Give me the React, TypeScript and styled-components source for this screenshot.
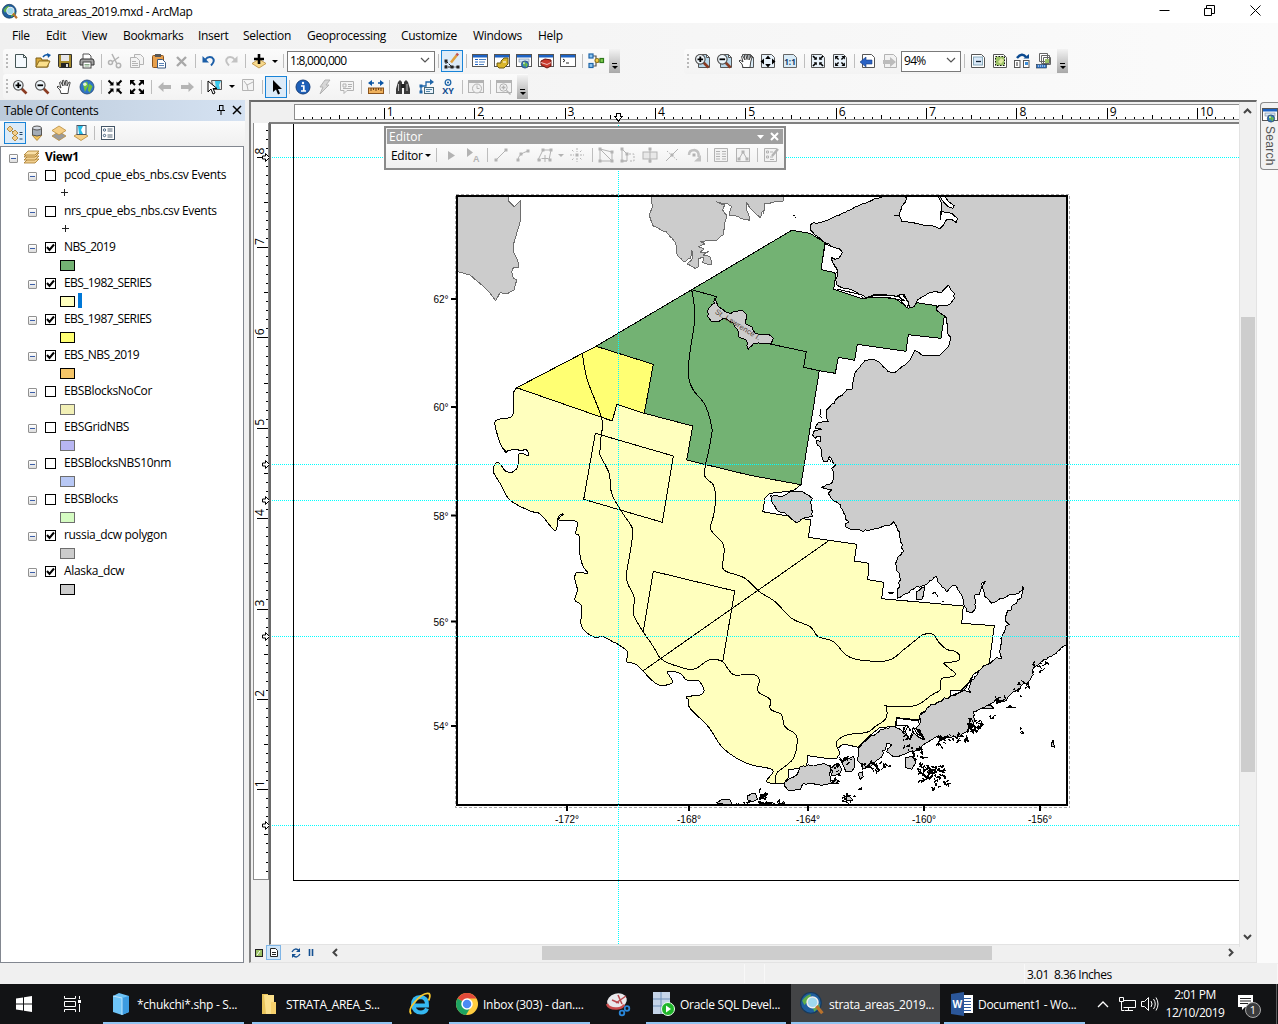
import React from "react";
import styled, { createGlobalStyle, css } from "styled-components";

const Global = createGlobalStyle`
  * { box-sizing: border-box; }
  html, body { margin: 0; padding: 0; overflow: hidden; }
  body { font-family: "Segoe UI", "Open Sans", "Noto Sans", sans-serif; font-size: 12px; color: #000; }
  svg { display: block; overflow: visible; }
`;

/* ---------- icons ---------- */

const page = (c = "#555", f = "#fff") => (
  <path d="M2.5 1.5h8l3 3v10h-11z M10.5 1.5v3h3" fill={f} stroke={c} />
);
const windowFrame = (
  <>
    <rect x="0.5" y="1.5" width="15" height="12" fill="#fff" stroke="#555" />
    <rect x="1" y="2" width="14" height="2.5" fill="#1c62c4" />
  </>
);
const lens = (sign: React.ReactNode) => (
  <>
    <path d="M9.5 9.5l5 5" stroke="#8a3b22" strokeWidth="2.6" />
    <circle cx="6.3" cy="6.3" r="4.8" fill="#eef6fb" stroke="#555" strokeWidth="1.2" />
    {sign}
  </>
);
const plusSign = <path d="M3.5 6.3h5.6M6.3 3.5v5.6" stroke="#000" strokeWidth="1.8" />;
const minusSign = <path d="M3.5 6.3h5.6" stroke="#000" strokeWidth="1.8" />;
const hand = (
  <path
    d="M5 14.5L4 11 1 8l1-1 3 2L3.5 3.5l1.2-.7L7 7 6.3 1.6l1.4-.3L9 6.5l.7-5 1.4.2L11 7l2-4 1.2.5-1.5 5.5-.7 5.5z"
    fill="#fff"
    stroke="#333"
    strokeWidth=".9"
  />
);
const corners = (s: number, arrows: string, tails: string) => (
  <g fill="#000" stroke="#000" transform={`translate(${8 - 8 * s} ${8 - 8 * s}) scale(${s})`}>
    <path d={tails} strokeWidth="2" />
    <path d={arrows} stroke="none" />
  </g>
);
const inward = (s = 1) =>
  corners(s, "M2.5 6.5h4v-4zM13.5 6.5h-4v-4zM2.5 9.5h4v4zM13.5 9.5h-4v4z", "M1.500 1.500l3.500 3.500M14.500 1.500L11 5M1.500 14.500L5 11M14.500 14.500L11 11");
const outward = (s = 1) =>
  corners(s, "M1 6V1h5zM15 6V1h-5zM1 10v5h5zM15 10v5h-5z", "M6 6L3 3M10 6l3-3M6 10l-3 3M10 10l3 3");
const globe = (cx: number, cy: number, r: number) => (
  <>
    <circle cx={cx} cy={cy} r={r} fill="#2f74c9" stroke="#27486e" strokeWidth=".8" />
    <path
      d={`M${cx - r * 0.6} ${cy - r * 0.5}l${r * 0.6} ${-r * 0.3} ${r * 0.2} ${r * 0.6} ${-r * 0.5} ${r * 0.9}zM${cx + r * 0.3} ${cy - r * 0.5}l${r * 0.5} ${r * 0.4} ${-r * 0.4} ${r * 0.9} ${-r * 0.3} ${-r * 0.3}z`}
      fill="#6fbf3c"
    />
    <circle cx={cx - r * 0.3} cy={cy - r * 0.4} r={r * 0.25} fill="#fff" opacity=".8" />
  </>
);
const dia = (y: number, f: string) => <path d={`M8 ${y}l7 4.500-7 4.500-7-4.500z`} fill={f} stroke="#b88a3a" strokeWidth=".8" />;
const G = "#b3b3b3";
const node = (x: number, y: number, c = G) => <rect x={x - 1.5} y={y - 1.5} width="3" height="3" fill={c} />;

const icons: Record<string, React.ReactNode> = {
  newDoc: page("#455", "#f4f9fd"),
  open: (
    <>
      <path d="M1 14V5h5l1 2h6v7z" fill="#d9a93a" stroke="#7c5e17" />
      <path d="M1 14l3-6h11l-3 6z" fill="#fbe08c" stroke="#8a6a1e" />
      <path d="M8 4q2-3 5-2" stroke="#0b55a5" strokeWidth="1.5" fill="none" />
      <path d="M12 0l4 2-3 3z" fill="#0b55a5" />
    </>
  ),
  save: (
    <>
      <path d="M1.500 1.500h13v13h-12l-1-1z" fill="#a58a2c" stroke="#333" />
      <rect x="4" y="2" width="8" height="6" fill="#e6e6ea" />
      <rect x="4" y="10" width="8" height="4.500" fill="#222" />
      <rect x="9" y="11" width="2" height="3" fill="#ddd" />
    </>
  ),
  print: (
    <>
      <path d="M4 6V1h6l2 2v3" fill="#fff" stroke="#555" />
      <path d="M2 6h12l1 2v4H1V8z" fill="#a3a3a3" stroke="#333" />
      <rect x="4" y="9" width="8" height="6" fill="#fff" stroke="#444" />
      <path d="M5.500 11.500h5M5.500 13h5" stroke="#8a8" />
    </>
  ),
  cut: (
    <g stroke={G} strokeWidth="1.500" fill="none">
      <path d="M5 1l5 10M12 4L5 9" />
      <circle cx="3.500" cy="9.500" r="2" />
      <circle cx="11.500" cy="12.500" r="2.200" />
    </g>
  ),
  copy: (
    <g fill="#f3f3f3" stroke={G}>
      <path d="M5.500 1.500h6l3 3v7h-9z" />
      <path d="M1.500 4.500h6l3 3v7h-9zM3 8.500h4M3 10.500h6M3 12.500h6" />
    </g>
  ),
  paste: (
    <>
      <rect x="1.500" y="2.500" width="11" height="12" rx="1" fill="#e8a04c" stroke="#8a531c" />
      <rect x="4" y="1" width="6" height="3" fill="#555" />
      <path d="M6.500 6.500h5l3 3v5.500h-8z" fill="#fff" stroke="#3c5a80" />
      <path d="M8 10.500h5M8 12.500h5" stroke="#5a84b8" />
    </>
  ),
  del: <path d="M4 4l9 9M13 4l-9 9" stroke="#a8a8a8" strokeWidth="2.400" />,
  undo: (
    <>
      <path d="M4 7q3-4 7-2.500 4 3-1 8" fill="none" stroke="#1b5ea8" strokeWidth="2" />
      <path d="M1.500 3v6.500H8z" fill="#1b5ea8" />
    </>
  ),
  redo: (
    <>
      <path d="M12 7q-3-4-7-2.500-4 3 1 8" fill="none" stroke="#c2c2c2" strokeWidth="2" />
      <path d="M14.500 3v6.500H8z" fill="#c2c2c2" />
    </>
  ),
  add: (
    <>
      {dia(6, "#f7d98c")}
      <path d="M8 1v10M3 6h10" stroke="#000" strokeWidth="2.600" />
    </>
  ),
  edit: (
    <>
      <path d="M2 8l6 6h6M2 8v6h6" stroke="#222" fill="none" strokeDasharray="3 1" />
      {node(2, 8, "#222")}
      {node(2, 14, "#222")}
      {node(8, 14, "#222")}
      {node(14, 14, "#222")}
      <path d="M7 9.500l5.500-7" stroke="#e0a13c" strokeWidth="2.600" />
      <path d="M12.500 2.500L14 .700" stroke="#c0504d" strokeWidth="2.600" />
    </>
  ),
  toc: (
    <>
      {windowFrame}
      <path d="M3 6.500h3M3 9h3M3 11.500h3" stroke="#1c62c4" />
      <path d="M7 6.500h7M7 9h6M7 11.500h5" stroke="#4b7fc0" />
    </>
  ),
  catalog: (
    <>
      {windowFrame}
      <path d="M3 13v-3h4V8l3-3h4v6l-4 4H5z" fill="#d9b62c" stroke="#6d5a10" />
      <path d="M9 9h3" stroke="#fff" />
    </>
  ),
  search: (
    <>
      {windowFrame}
      <rect x="3" y="6" width="10" height="3" fill="#d8e9f8" stroke="#789" strokeWidth=".6" />
      {globe(9, 11.500, 3.600)}
    </>
  ),
  toolbox: (
    <>
      {windowFrame}
      <path d="M3 8l4-2 6 1v6l-4 2-6-3z" fill="#c93a2e" stroke="#6d130c" />
      <path d="M3 9.500l6 2 4-2" stroke="#fff" strokeWidth=".7" fill="none" />
    </>
  ),
  python: (
    <>
      {windowFrame}
      <path d="M3 6l2 1.500L3 9M6 10h3" stroke="#222" fill="none" />
    </>
  ),
  model: (
    <g strokeWidth="1.200">
      <path d="M5 3h3v4h3M5 13h3V8" fill="none" stroke="#555" />
      <rect x="1" y="1" width="4" height="4" fill="#8ec5ef" stroke="#1e65a8" />
      <rect x="1" y="10.500" width="4" height="4" fill="#8ec5ef" stroke="#1e65a8" />
      <circle cx="9" cy="7.500" r="2" fill="#f4cf4c" stroke="#8f741a" />
      <rect x="12" y="5.500" width="3.500" height="4" fill="#7ecb4e" stroke="#2f7a1b" />
    </g>
  ),
  zoomIn: lens(plusSign),
  zoomOut: lens(minusSign),
  pan: hand,
  globe: globe(8, 8, 7),
  fixedIn: inward(),
  fixedOut: outward(),
  back: <path d="M1 8l5.500-5v3H14v4H6.500v3z" fill="#b5b5b5" />,
  fwd: <path d="M15 8L9.500 3v3H2v4h7.500v3z" fill="#b5b5b5" />,
  select: (
    <>
      <path d="M4.500 1.500h10v9h-8z" fill="#e9e9e9" stroke="#555" />
      <path d="M8 2h6l-2 4 1 4H9z" fill="#38c8ec" />
      <path d="M1 2v11l3-3 2 5 2-1-2-4.500h4z" fill="#fff" stroke="#000" />
    </>
  ),
  clearSel: <path d="M2.500 .500h11v11h-11zM4 2l3 4 6-3M7 6l1 5" fill="#f4f4f4" stroke={G} />,
  pointer: <path d="M5 1v12l3-2.500 2 5 2-1-2-4.500h4z" fill="#000" />,
  info: (
    <>
      <circle cx="8" cy="8" r="7" fill="#1d5fb8" stroke="#153f7c" />
      <path d="M6 7h2.800v4.500M6 12h5" stroke="#fff" strokeWidth="1.700" fill="none" />
      <circle cx="8" cy="4" r="1.200" fill="#fff" />
    </>
  ),
  bolt: <path d="M8 1h5L9 6h3L3 15l3-7H3z" fill="#d7d7d7" stroke={G} />,
  popup: <path d="M1.500 2.500h13v9H8l-3 3v-3H1.500zM4 5h3v3H4zM9 5.500h4M9 7.500h4M4 9.500h8" fill="#f4f4f4" stroke={G} />,
  measure: (
    <>
      <path d="M2 4h12" stroke="#0b55a5" strokeWidth="1.500" strokeDasharray="4 4" />
      <path d="M0 4l4-3v6zM16 4l-4-3v6z" fill="#0b55a5" />
      <rect x="0.500" y="9" width="15" height="5.500" fill="#efb15c" stroke="#8a531c" />
      <path d="M3 9v3M5.500 9v2M8 9v3M10.500 9v2M13 9v3" stroke="#6b3d12" />
    </>
  ),
  find: (
    <>
      <path d="M3 3l2-2 2 2v12H1v-5zM13 3l-2-2-2 2v12h6v-5z" fill="#3b3b3b" />
      <rect x="6" y="5" width="4" height="4" fill="#222" />
      <path d="M3.500 5v7M12 5v7" stroke="#bbb" />
    </>
  ),
  route: (
    <>
      <path d="M3 13V7h5V3h5" fill="none" stroke="#1e65a8" strokeWidth="1.300" />
      <path d="M12 0l4 3-4 3z" fill="#1e65a8" />
      {node(3, 13, "#1e65a8")}
      {node(3, 7, "#1e65a8")}
      <rect x="6.500" y="8.500" width="9" height="6" fill="#eaf3fb" stroke="#467" />
      <path d="M8 10.500h6M8 12.500h4" stroke="#58a" />
    </>
  ),
  xy: (
    <>
      <circle cx="8" cy="3.500" r="2.800" fill="#fff" stroke="#1e65a8" strokeWidth="1.300" />
      <circle cx="8" cy="3.500" r="1.100" fill="#1e65a8" />
      <text x="8" y="15" textAnchor="middle" fontSize="9" fontWeight="700" fill="#134f91" fontFamily="Open Sans, sans-serif">XY</text>
    </>
  ),
  time: (
    <g fill="#f2f2f2" stroke={G}>
      <rect x="0.500" y="1.500" width="15" height="12" />
      <path d="M1 3h14" strokeWidth="2" />
      <circle cx="9" cy="9.500" r="4.500" />
      <path d="M9 6.500v3h2.500" fill="none" />
    </g>
  ),
  viewer: (
    <g fill="#f2f2f2" stroke={G}>
      <rect x="0.500" y="1.500" width="15" height="12" />
      <path d="M1 3h14" strokeWidth="2" />
      <circle cx="7.500" cy="8.500" r="3.700" />
      <path d="M5.500 8.500h4M7.500 6.500v4M10.500 11.500l4 4" strokeWidth="1.500" />
    </g>
  ),
  pgZoomIn: (
    <>
      <g transform="translate(2 0)">{page("#555", "#b9d9ec")}</g>
      {lens(plusSign)}
    </>
  ),
  pgZoomOut: (
    <>
      <g transform="translate(2 0)">{page("#555", "#b9d9ec")}</g>
      {lens(minusSign)}
    </>
  ),
  pgPan: (
    <>
      <g transform="translate(2 0)">{page("#555", "#d9ecf8")}</g>
      {hand}
    </>
  ),
  pgWhole: (
    <>
      <path d="M1.500 1.500h10l3 3v10h-13z" fill="#e8f2fa" stroke="#555" />
      <path d="M8 2.500l2.800 3.500H5.200zM8 14.500l2.800-3.500H5.200zM.500 8.500L4 5.500v6zM15.500 8.500L12 5.500v6z" fill="#000" />
    </>
  ),
  pg100: (
    <>
      <path d="M1.500 1.500h10l3 3v10h-13z" fill="#d9ecf8" stroke="#666" />
      <text x="8" y="12" textAnchor="middle" fontSize="8" fontWeight="700" fill="#123c6b" fontFamily="Open Sans, sans-serif">1:1</text>
    </>
  ),
  pgFixedIn: (
    <>
      <path d="M1.500 1.500h10l3 3v10h-13z" fill="#e8f2fa" stroke="#555" />
      {inward(0.78)}
    </>
  ),
  pgFixedOut: (
    <>
      <path d="M1.500 1.500h10l3 3v10h-13z" fill="#e8f2fa" stroke="#555" />
      {outward(0.7)}
    </>
  ),
  pgBack: (
    <>
      <path d="M2.500 1.500h9l3 3v10h-12z" fill="#fff" stroke="#555" />
      <path d="M0 9l6-5v3h6v4H6v3z" fill="#2a62c4" stroke="#173d85" strokeWidth=".6" />
    </>
  ),
  pgFwd: (
    <>
      <path d="M2.500 1.500h9l3 3v10h-12z" fill="#f2f2f2" stroke={G} />
      <path d="M14 9L8 4v3H1v4h7v3z" fill="#bcbcbc" />
    </>
  ),
  draft: (
    <>
      <path d="M1.500 1.500h10l3 3v10h-13z" fill="#fff" stroke="#555" />
      <rect x="3.500" y="4" width="9" height="8" fill="#d9e8f8" stroke="#8ab" />
      <path d="M6 8.500h5" stroke="#123" strokeWidth="1.300" />
    </>
  ),
  focus: (
    <>
      <path d="M1.500 1.500h10l3 3v10h-13z" fill="#fff" stroke="#555" />
      <rect x="3.500" y="3.500" width="9" height="9" fill="#9cc266" stroke="#111" strokeDasharray="1.500 1.500" />
      <path d="M6 9l3-4 3 2-3 4z" fill="#dfe9a0" />
    </>
  ),
  changeLayout: (
    <>
      <path d="M3 5q5-6 9-1" stroke="#0b4a90" strokeWidth="2.500" fill="none" />
      <path d="M9.500 5.500H15V1z" fill="#0b4a90" />
      <rect x="0.500" y="7.500" width="5.500" height="7" fill="#fff" stroke="#555" />
      <rect x="9.500" y="7.500" width="5.500" height="7" fill="#fff" stroke="#555" />
      <path d="M2 10h2M2 12h2" stroke="#333" />
      <rect x="11" y="9" width="3" height="3" fill="#3c8ed8" />
    </>
  ),
  ddp: (
    <>
      <path d="M3.500 .500h8v8h-8zM5.500 2.500h8v8h-8zM7.500 4.500h7v7h-7z" fill="#fff" stroke="#666" />
      <rect x="9" y="6" width="4" height="4" fill="#9cc266" />
      <rect x="0.500" y="11.500" width="10" height="3.500" fill="#2f74c9" stroke="#234" strokeWidth=".6" />
      <path d="M2 13h7" stroke="#fff" strokeDasharray="1 1" />
    </>
  ),
  listDraw: (
    <>
      <path d="M4 5l4 4v4h2M8 8h3" stroke="#a77a28" fill="none" />
      <path d="M0 4l3-3 3 3-3 3zM5 8l3-3 3 3-3 3zM5 13l3-3 3 3-3 3z" fill="#f4cf8c" stroke="#a77a28" strokeWidth=".8" />
      <path d="M12.500 7.500h3M12.500 9.500h3M12.500 14h3" stroke="#246" />
    </>
  ),
  listSource: (
    <>
      <path d="M3 10h10l-5 5.500z" fill="#f1c25c" stroke="#a77a28" strokeWidth=".8" />
      <path d="M3.500 3v7q4.500 2 9 0V3" fill="#a3acb8" stroke="#555" />
      <ellipse cx="8" cy="3" rx="4.500" ry="2" fill="#d5dae2" stroke="#555" />
    </>
  ),
  listVis: (
    <>
      {dia(6.500, "#9b9b9b")}
      {dia(1, "#f6cf86")}
    </>
  ),
  listSel: (
    <>
      {dia(6.500, "#f6cf86")}
      <rect x="4" y="0.500" width="9" height="9" fill="#fff" stroke="#456" />
      <path d="M5 1h5L8 5l2 4H6z" fill="#23bde8" />
    </>
  ),
  options: (
    <>
      <rect x="1.500" y="1.500" width="13" height="13" fill="#fff" stroke="#456" />
      <circle cx="4.500" cy="5" r="1.200" fill="none" stroke="#246" strokeWidth=".8" />
      <circle cx="4.500" cy="10.500" r="1.200" fill="none" stroke="#246" strokeWidth=".8" />
      <path d="M7.500 4h5M7.500 6h5M7.500 10h5M7.500 12h5" stroke="#567" />
    </>
  ),
  layers: (
    <>
      <path d="M1 14l4-4h11l-4 4z" fill="#f0cf90" stroke="#a77a28" strokeWidth=".8" />
      <path d="M1 11l4-4h11l-4 4z" fill="#f0cf90" stroke="#a77a28" strokeWidth=".8" />
      <path d="M1 8l4-4h11l-4 4z" fill="#f0cf90" stroke="#a77a28" strokeWidth=".8" />
      <path d="M1 6l4-4h11l-4 4z" fill="#f9dfa6" stroke="#a77a28" strokeWidth=".8" />
    </>
  ),
  eArrow: <path d="M5 4v9l7-4.500z" fill={G} />,
  eArrowA: (
    <>
      <path d="M2 1v9l6-4.500z" fill={G} />
      <text x="8" y="15" fontSize="9" fontWeight="700" fill={G} fontFamily="Liberation Sans, sans-serif">A</text>
    </>
  ),
  eLine: (
    <>
      <path d="M3 13L13 3" stroke={G} />
      {node(3, 13)}
      {node(13, 3)}
    </>
  ),
  eArc: (
    <>
      <path d="M3 13q0-6 10-9" stroke={G} fill="none" />
      {node(3, 13)}
      {node(6, 7)}
      {node(13, 4)}
    </>
  ),
  eTrace: (
    <>
      <path d="M6 3h8l-2 10M1 13L6 3M1 13h3" stroke={G} fill="none" />
      {node(6, 3)}
      {node(14, 3)}
      {node(2, 13)}
      {node(13, 13)}
      <path d="M4.500 11.500h7M8 8v7" stroke={G} />
    </>
  ),
  ePoint: (
    <>
      <path d="M1 8h4M11 8h4M8 1v4M8 11v4M3 3l2 2M11 11l2 2M3 13l2-2M11 5l2-2" stroke={G} strokeDasharray="2 1" />
      {node(8, 8)}
    </>
  ),
  eVert: (
    <>
      <path d="M2 2v12h12V5zM2 2l12 12" stroke={G} fill="none" />
      {node(2, 2)}
      {node(2, 14)}
      {node(14, 14)}
      {node(14, 5)}
    </>
  ),
  eReshape: (
    <>
      <path d="M2 2v12h5V7L2 2M2 14h5" stroke={G} fill="none" />
      <path d="M9 7h5v7H9" stroke={G} fill="none" strokeDasharray="2 1.500" />
      {node(2, 2)}
      {node(2, 14)}
      {node(7, 7)}
    </>
  ),
  eCut: (
    <>
      <rect x="1" y="5" width="14" height="7" fill="#e8e8e8" stroke={G} />
      <path d="M8 1v15" stroke={G} />
      {node(8, 2)}
      {node(8, 14)}
    </>
  ),
  eSplit: (
    <>
      <path d="M2 14L14 2" stroke={G} />
      <path d="M3 4l10 9" stroke={G} strokeDasharray="1.500 1.500" />
      {node(8, 8)}
    </>
  ),
  eRotate: (
    <>
      <path d="M3 8q0-5 5.500-5 5 1 4 7" fill="none" stroke="#c2c2c2" strokeWidth="2.500" />
      <path d="M8 14.500h7V8z" fill="#c2c2c2" />
      {node(8, 8)}
    </>
  ),
  eAttr: <path d="M1.500 1.500h13v13h-13zM3 4.500h4M3 7h4M3 9.500h4M3 12h4M9 4.500h4M9 7h4M9 9.500h4M9 12h4" fill="#f2f2f2" stroke={G} />,
  eSketch: (
    <>
      <rect x="1.500" y="1.500" width="13" height="13" fill="#f2f2f2" stroke={G} />
      <path d="M4 12l4-7 4 7" stroke={G} fill="none" />
      {node(4, 12)}
      {node(8, 5)}
      {node(12, 12)}
    </>
  ),
  eCreate: (
    <>
      <path d="M1.500 1.500h12v13h-12zM3.500 4h2v2h-2zM3.500 9h2v2h-2zM7 5h3M7 10h3M7 12.500h4" fill="#f2f2f2" stroke={G} />
      <path d="M9 9l6-7" stroke={G} strokeWidth="2.400" />
    </>
  ),
};

const Icon = ({ name, size = 16 }: { name: string; size?: number }) => (
  <svg width={size} height={size} viewBox="0 0 16 16" fill="none">
    {icons[name]}
  </svg>
);

/* ---------- window chrome ---------- */

const Screen = styled.div`
  width: 1278px;
  height: 1024px;
  display: flex;
  flex-direction: column;
  background: #f0f0f0;
  overflow: hidden;
  white-space: pre;
`;

const TitleBar = styled.header`
  height: 23px;
  flex: none;
  background: #fff;
  display: flex;
  align-items: center;
  padding-left: 2px;
`;
const Title = styled.span`
  margin-left: 5px;
  flex: 1;
  font-size: 12px;
  letter-spacing: -0.430px;
`;
const Caption = styled.span`
  width: 45.500px;
  height: 21px;
  align-self: flex-start;
  display: flex;
  align-items: center;
  justify-content: center;
`;

const Bars = styled.div`
  height: 77px;
  flex: none;
  background: linear-gradient(90deg, #f0f0f0, #fbfbfb);
  display: flex;
  flex-direction: column;
`;
const MenuBar = styled.nav`
  height: 26px;
  display: flex;
  align-items: center;
  padding-left: 12px;
`;
const MenuItem = styled.span<{ $w: number }>`
  width: ${(p) => p.$w}px;
  letter-spacing: -0.300px;
`;
const BarRow = styled.div`
  height: 26px;
  display: flex;
  align-items: flex-start;
  padding-left: 3px;
`;
const Toolbar = styled.div<{ $ml?: number }>`
  height: 25px;
  margin-left: ${(p) => p.$ml ?? 0}px;
  display: flex;
  align-items: center;
  background: linear-gradient(#fbfbfb, #f3f3f3);
  border-radius: 3px 0 0 3px;
`;
const Grip = styled.span<{ $w?: number }>`
  width: ${(p) => p.$w ?? 7}px;
  height: 15px;
  padding-left: 3px;
  &::before {
    content: "";
    display: block;
    width: 2px;
    height: 15px;
    background: repeating-linear-gradient(#b8b8b8 0 2px, transparent 2px 4px);
  }
`;
const Slot = styled.span<{ $on?: boolean; $w?: number }>`
  width: ${(p) => p.$w ?? 22}px;
  height: 22px;
  flex: none;
  display: flex;
  align-items: center;
  justify-content: center;
  ${(p) =>
    p.$on &&
    css`
      border: 1px solid #1883d7;
      background: #dcebf8;
    `}
`;
const Sep = styled.span<{ $w?: number }>`
  width: ${(p) => p.$w ?? 6}px;
  height: 14px;
  flex: none;
  display: flex;
  justify-content: center;
  &::before {
    content: "";
    width: 1px;
    background: #bdbdbd;
  }
`;
const Triangle = styled.span<{ $c?: string; $w?: number }>`
  width: ${(p) => p.$w ?? 9}px;
  flex: none;
  display: flex;
  justify-content: center;
  &::before {
    content: "";
    border: 3px solid transparent;
    border-top-color: ${(p) => p.$c ?? "#000"};
    border-bottom: 0;
  }
`;
const Combo = styled.span<{ $w: number }>`
  width: ${(p) => p.$w}px;
  height: 21px;
  border: 1px solid #7a7a7a;
  background: #fff;
  display: flex;
  align-items: center;
  justify-content: space-between;
  padding: 0 4px 2px 2px;
  letter-spacing: -0.720px;
`;
const Overflow = styled.span`
  width: 11px;
  height: 24px;
  margin-left: 2px;
  background: linear-gradient(#f3f3f3, #a8a8a8);
  display: flex;
  flex-direction: column;
  align-items: center;
  justify-content: flex-end;
  padding-bottom: 4px;
  gap: 2px;
  &::before {
    content: "";
    width: 5px;
    height: 1px;
    background: #000;
  }
  &::after {
    content: "";
    border: 3px solid transparent;
    border-top-color: #000;
    border-bottom: 0;
  }
`;
const Chevron = () => (
  <svg width="10" height="6" viewBox="0 0 10 6">
    <path d="M1 1l4 4 4-4" fill="none" stroke="#555" strokeWidth="1.200" />
  </svg>
);

type Item = string | [string, number] | { on: string };
const Tools = ({ items }: { items: Item[] }) => (
  <>
    {items.map((it, i) => {
      if (typeof it === "object" && !Array.isArray(it))
        return (
          <Slot key={i} $on>
            <Icon name={it.on} />
          </Slot>
        );
      const [n, w] = Array.isArray(it) ? it : [it, undefined];
      if (n === "|") return <Sep key={i} $w={w} />;
      if (n === "v") return <Triangle key={i} $w={w} />;
      if (n === "vg") return <Triangle key={i} $w={w} $c={G} />;
      return (
        <Slot key={i} $w={w}>
          <Icon name={n} />
        </Slot>
      );
    })}
  </>
);

/* ---------- table of contents ---------- */

const Main = styled.main`
  height: 863px;
  flex: none;
  display: flex;
`;
const Toc = styled.aside`
  width: 245px;
  flex: none;
  display: flex;
  flex-direction: column;
`;
const TocHead = styled.div`
  height: 21px;
  display: flex;
  align-items: center;
  padding: 0 4px 1px 4px;
  background: linear-gradient(90deg, #bccbdb, #d5e2f2);
  letter-spacing: -0.360px;
  gap: 8px;
  & > span {
    flex: 1;
    padding-top: 1px;
  }
`;
const TocTools = styled.div`
  height: 25px;
  display: flex;
  align-items: center;
  padding: 0 0 2px 4px;
  background: linear-gradient(#fbfbfb, #f0f0f0);
`;
const Tree = styled.div`
  flex: 1;
  width: 244px;
  background: #fff;
  border: 1px solid #828790;
  padding-top: 1px;
`;
const Row = styled.div<{ $indent: number }>`
  height: 18px;
  display: flex;
  align-items: center;
  padding-left: ${(p) => p.$indent}px;
`;
const Expander = styled.span`
  width: 9px;
  height: 9px;
  margin-top: 2px;
  border: 1px solid #919191;
  border-radius: 1px;
  background: linear-gradient(#fff, #ddd);
  display: flex;
  align-items: center;
  justify-content: center;
  &::before {
    content: "";
    width: 5px;
    height: 1px;
    background: #3c5fa8;
  }
`;
const Check = styled.span`
  width: 11px;
  height: 11px;
  margin: 1px 8px 0 8px;
  border: 1px solid #000;
  background: #fff;
`;
const Name = styled.span<{ $bold?: boolean; $caps?: boolean }>`
  font-weight: ${(p) => (p.$bold ? 700 : 400)};
  letter-spacing: ${(p) => (p.$bold ? -0.4 : p.$caps ? -0.6 : -0.33)}px;
  margin-top: -1px;
`;
const Swatch = styled.span<{ $fill: string; $line: string }>`
  width: 15px;
  height: 11px;
  margin-top: 1px;
  background: ${(p) => p.$fill};
  border: 1px solid ${(p) => p.$line};
`;
const EditMark = styled.span`
  width: 4px;
  height: 15px;
  margin: -1px 0 0 3px;
  background: #0078d7;
`;
const Cross = styled.span`
  width: 7px;
  height: 7px;
  margin-top: -2px;
  background: linear-gradient(#222, #222) 3px 0 / 1px 7px no-repeat, linear-gradient(#222, #222) 0 3px / 7px 1px no-repeat;
`;

const layers = [
  { name: "pcod_cpue_ebs_nbs.csv Events", on: false, cross: 60 },
  { name: "nrs_cpue_ebs_nbs.csv Events", on: false, cross: 61 },
  { name: "NBS_2019", on: true, fill: "#73b273" },
  { name: "EBS_1982_SERIES", on: true, fill: "#ffffbe", editing: true },
  { name: "EBS_1987_SERIES", on: true, fill: "#ffff73" },
  { name: "EBS_NBS_2019", on: true, fill: "#f5c567" },
  { name: "EBSBlocksNoCor", on: false, fill: "#f2f0b6", soft: true },
  { name: "EBSGridNBS", on: false, fill: "#b8b6f2", soft: true },
  { name: "EBSBlocksNBS10nm", on: false, fill: "#b8c8f5", soft: true },
  { name: "EBSBlocks", on: false, fill: "#d5fcc2", soft: true },
  { name: "russia_dcw polygon", on: true, fill: "#cccccc", soft: true },
  { name: "Alaska_dcw", on: true, fill: "#cccccc" },
];

/* ---------- layout view ---------- */

const View = styled.section`
  width: 1008px;
  margin-left: 4px;
  display: flex;
  flex-direction: column;
  background: #f0f0f0;
  border-top: 2px solid #696969;
  border-left: 2px solid #828282;
  border-right: 1px solid #e3e3e3;
  border-bottom: 1px solid #e3e3e3;
`;
const RulerTop = styled.div`
  height: 20px;
  flex: none;
  display: flex;
  padding: 2px 0 0 20px;
`;
const Body = styled.div`
  height: 823px;
  flex: none;
  display: flex;
`;
const RulerLeft = styled.div`
  width: 18px;
  flex: none;
  padding: 1px 0 0 2px;
`;
const Center = styled.div`
  width: 970px;
  height: 823px;
  flex: none;
  position: relative;
  overflow: hidden;
  background: #fff;
  border-left: 2px solid #696969;
  border-top: 2px solid #808080;
  border-bottom: 1px solid #e3e3e3;
`;
const VScroll = styled.div`
  width: 16px;
  height: 845px;
  margin-top: -20px;
  margin-left: 0;
  display: flex;
  flex-direction: column;
  align-items: center;
  justify-content: space-between;
  padding: 6px 0 7px;
  border-left: 1px solid #e3e3e3;
`;
const VThumb = styled.div`
  width: 14px;
  height: 455px;
  margin-top: 41px;
  background: #cdcdcd;
`;
const HScroll = styled.div`
  height: 17px;
  display: flex;
  align-items: center;
  padding-bottom: 2px;
`;
const HThumb = styled.div`
  width: 450px;
  height: 14px;
  background: #cdcdcd;
  margin: 1px 0 0 204px;
`;
const Gap = styled.span<{ $w: number }>`
  width: ${(p) => p.$w}px;
  flex: none;
`;
const ViewTab = styled.span<{ $on?: boolean }>`
  width: 15px;
  height: 15px;
  flex: none;
  display: flex;
  align-items: center;
  justify-content: center;
  ${(p) =>
    p.$on &&
    css`
      border: 1px solid #7fb5e6;
      background: #cfe5f8;
    `}
`;

const Dock = styled.div`
  flex: 1;
  background: #fbfbfb;
  padding: 2px 0 0 3px;
`;
const DockTab = styled.div`
  height: 68px;
  border: 1px solid #8c8c8c;
  border-right: 0;
  border-radius: 4px 0 0 4px;
  background: #f2f2f2;
  display: flex;
  flex-direction: column;
  align-items: center;
  padding-top: 4px;
  gap: 3px;
  & > span {
    writing-mode: vertical-rl;
    color: #555;
    font-family: "Liberation Sans", sans-serif;
    font-size: 12px;
    line-height: 14px;
    letter-spacing: 0.300px;
  }
`;

const EditorBar = styled.div`
  position: absolute;
  left: 113px;
  top: 2px;
  width: 402px;
  height: 44px;
  border: 2px solid #8a8a8a;
  background: #f4f4f4;
  display: flex;
  flex-direction: column;
`;
const EditorHead = styled.div`
  height: 15px;
  flex: none;
  background: #a0a0a0;
  color: #fff;
  display: flex;
  align-items: center;
  margin: 1px 1px 0;
  padding: 0 4px 0 2px;
  gap: 6px;
  & > span:first-child {
    flex: 1;
  }
`;
const EditorTools = styled.div`
  flex: 1;
  display: flex;
  align-items: center;
  padding-left: 5px;
  padding-bottom: 2px;
  background: linear-gradient(#fcfcfc, #f0f0f0);
`;
const EditorLabel = styled.span`
  width: 33px;
  letter-spacing: -0.300px;
`;

/* ---------- rulers ---------- */

const INCH = 90.36;
const HRuler = () => {
  const marks = Array.from({ length: 105 }, (_, i) => i).filter((i) => i > 0);
  return (
    <svg width="945" height="17" viewBox="294 104 945 17" shapeRendering="crispEdges">
      <rect x="294" y="104" width="945" height="16" fill="#8c8c8c" />
      <rect x="294.500" y="105" width="945" height="14" fill="#fff" />
      {marks.map((i) => {
        const x = Math.round(293.600 + (i * INCH) / 10);
        const top = i % 10 === 0 ? 108 : i % 5 === 0 ? 115 : 117;
        return <rect key={i} x={x} y={top} width="1" height={119 - top} fill="#000" />;
      })}
      {Array.from({ length: 10 }, (_, i) => (
        <text key={i} x={296.500 + (i + 1) * INCH} y="115.500" fontSize="12" letterSpacing="-0.5" fontFamily="Open Sans, sans-serif">
          {i + 1}
        </text>
      ))}
      <path d="M616.500 113.500h4v3h2l-4 4.500-4-4.500h2z" fill="#fff" stroke="#000" />
    </svg>
  );
};
const guideY = [157, 464, 500, 636, 825];
const VRuler = () => (
  <svg width="17" height="757" viewBox="253 123 17 757">
    <g shapeRendering="crispEdges">
      <rect x="253" y="123" width="16" height="757" fill="#8c8c8c" />
      <rect x="254" y="123" width="14" height="756" fill="#fff" />
      {Array.from({ length: 84 }, (_, i) => {
        const y = Math.round(879.6 - (i * INCH) / 10);
        const left = i % 10 === 0 ? 257 : i % 5 === 0 ? 264 : 266;
        return i > 0 && <rect key={i} x={left} y={y} width={268 - left} height="1" fill="#000" />;
      })}
    </g>
    {Array.from({ length: 8 }, (_, i) => (
      <text key={i} transform={`translate(264 ${877.500 - (i + 1) * INCH}) rotate(-90)`} fontSize="12" fontFamily="Open Sans, sans-serif">
        {i + 1}
      </text>
    ))}
    {guideY.map((y) => (
      <path key={y} d={`M262.500 ${y - 1}h3v-2.500l4 4-4 4v-2.500h-3z`} fill="#fff" stroke="#000" />
    ))}
  </svg>
);

/* ---------- map ---------- */

type Pt = [number, number];
type Sheet = [number, number, string];
/* Map linework is digitised in thirds of a pixel, sheet by sheet. */
const join = (...sheets: Sheet[]) =>
  sheets.flatMap(([ox, oy, s]) =>
    s
      .trim()
      .split(/\s+/)
      .map((p) => {
        const [x, y] = p.split(",").map(Number);
        return [ox + x / 3, oy + y / 3] as Pt;
      })
  );
const str = (pts: Pt[]) => pts.map(([x, y]) => `${x.toFixed(1)},${y.toFixed(1)}`).join(" ");

/* Catmull-Rom resampling for depth contours and the shelf edge. */
const smooth = (pts: Pt[]) => {
  const out: Pt[] = [];
  for (let i = 0; i < pts.length - 1; i++) {
    const a = pts[Math.max(i - 1, 0)];
    const b = pts[i];
    const c = pts[i + 1];
    const d = pts[Math.min(i + 2, pts.length - 1)];
    for (let k = 0; k < 6; k++) {
      const t = k / 6;
      const f = (n: 0 | 1) =>
        0.5 * (2 * b[n] + (c[n] - a[n]) * t + (2 * a[n] - 5 * b[n] + 4 * c[n] - d[n]) * t * t + (3 * b[n] - a[n] - 3 * c[n] + d[n]) * t * t * t);
      out.push([f(0), f(1)]);
    }
  }
  out.push(pts[pts.length - 1]);
  return out;
};
const rough = (pts: Pt[], amp: number) => {
  let seed = 7;
  const rnd = () => {
    seed = (seed * 16807) % 2147483647;
    return seed / 2147483647 - 0.5;
  };
  const out: Pt[] = [];
  pts.forEach((p, i) => {
    out.push(p);
    const q = pts[i + 1];
    if (!q) return;
    const d = Math.hypot(q[0] - p[0], q[1] - p[1]);
    if (d > 60) return;
    const n = Math.floor(d / 2.5);
    for (let k = 1; k < n; k++) {
      const t = k / n;
      out.push([p[0] + (q[0] - p[0]) * t + rnd() * amp, p[1] + (q[1] - p[1]) * t + rnd() * amp]);
    }
  });
  return out;
};

const A: Pt = [450, 190];
const B: Pt = [760, 190];
const C: Pt = [480, 430];
const D: Pt = [750, 450];
const E: Pt = [680, 640];

const alaskaNorth = join([...B, "370,20 350,25 300,45 250,68 205,90 185,97 155,100 151,108 152,120 165,135 180,145 190,155 200,160 215,170 240,177 247,187 237,205 225,207 214,200 217,215 230,235 233,250 227,270 230,285 245,293 270,298 295,310 310,325 325,320 345,313 380,315 410,320 420,312 432,312 440,328 447,345 447,362 462,350 468,338 480,325 510,308 530,305 545,308 560,290 565,285 572,298 583,310 583,325 570,343 550,348 535,348 528,358 535,365 550,375 560,385 563,420 571,450 560,475 540,495 510,498 485,495 465,480 460,490 455,500 435,525 420,535 405,547 385,545 370,530 355,515 340,507 315,512 300,530 285,550 277,580 275,600 262,598 200,660 198,680 205,695 175,697 165,715 185,718 163,722 158,735 165,745 180,738 182,755 168,750 172,765 185,780 187,810"]);
const alaskaSouth = join(
  [...D, "217,28 233,35 240,20 250,40 257,45 245,55 252,75 245,100 215,112 245,120 235,130 243,145 265,160 278,180 285,205 297,215 285,230 305,240 355,242 390,233 425,222 430,215 440,230 448,260 462,305 445,320 437,340 447,375 450,410 443,430 443,445 470,430 500,410 525,405 540,392 560,380 575,410 590,425 610,405 628,425 640,450 643,468 650,485 665,488 677,470 672,440 690,425 695,400 707,393 697,410 705,440 725,460 770,440 810,425 818,410 812,445 800,460 770,490 768,515 778,523 765,530 757,560 750,600 755,625 740,622 720,640 690,660 665,690 640,715 600,740 560,757 530,775"],
  [...E, "740,205 720,225 718,255 708,265 730,290 735,300 715,290 700,275 690,300 675,275 640,260 600,270 560,300 535,325 532,360 548,388 580,370 605,350 618,312 635,314 620,335 640,350 665,345 690,335 715,325 745,305 770,290 790,297 840,288 870,265 885,240 880,215 900,207 920,200 945,180 970,185 1000,155 1040,130 1055,110 1060,85 1085,65 1120,45 1150,20 1162,12"]
);
const alaska = str([[1067, 196], ...rough(alaskaNorth, 1.3), ...rough(alaskaSouth, 2.4)]);

const russiaWest = str(join([...A, "20,18 175,18 177,35 192,50 205,38 212,30 212,90 200,130 190,165 192,190 203,210 206,233 190,233 185,245 190,265 200,270 192,300 170,312 150,308 137,332 120,310 95,285 60,255 20,244"]));
const russiaEast = str(
  rough(join([...A, "605,18 606,55 597,75 607,105 635,122 648,125 676,157 682,195 700,215 722,205 725,180 728,205 712,222 735,235 747,230 745,205 760,203 757,218 785,225 780,200 760,195 775,185 750,188 762,178 745,170 765,162 750,155 775,150 800,150 820,135 825,95 830,75 818,60 825,45 800,35 830,40 845,50 838,75 865,80 900,93 890,60 888,38 905,60 930,83 945,50 940,70 945,40 965,38 998,35 1003,18"]), 1.2)
);
const green = str(
  join(
    [...A, "438,469 725,299"],
    [...B, "95,121 150,130 195,158 183,238 228,248 221,298 310,327 345,318 410,328 445,355 462,350 470,338 530,347 528,360 553,378 543,445 445,434 438,484 292,463 284,511 235,502 226,550 178,542"],
    [...D, "153,104 0,76"],
    [...C, "620,90"],
    [...A, "728,708 583,670 610,523"]
  )
);
const bright = str(join([...A, "200,593 438,469 610,523 583,670 500,643 487,693"]));
const pale = str([
  ...rough(
    smooth(
      join(
        [...A, "200,593 190,610 190,640 185,680 140,690 137,715 155,770 172,785"],
        [...C, "75,65 110,57 118,62 140,60 145,77 125,70 115,75 113,110 95,127 75,122 65,108 55,98 45,103 40,125 60,160 90,210 150,243 180,252 220,298 230,295 235,260 250,252 237,270 290,275 287,310 298,320 300,375 310,410 323,430 290,427 285,450 292,480 285,510 305,530 305,590 345,623 370,620 440,662 440,695 470,705 530,762 570,762 577,752 563,725 600,730 620,750 655,752 672,780 660,795 620,800"],
        [...E, "25,180 30,205 85,260 130,325 200,370 278,390 260,425 310,432"]
      )
    ),
    0.9
  ),
  ...join(
    [...E, "325,412 325,390 380,380 383,347 455,357 470,355 480,340 473,325 490,312 535,322 560,295 600,262 645,260 650,233 718,240 722,220 810,170 813,150 855,150 880,103 930,72"],
    [...D, "718,640 733,527 635,520 640,468 395,446 401,397 353,389 357,340 313,333 320,283 175,262 183,210 38,185 45,145 60,130 130,122 153,104 0,76"],
    [...C, "620,90"],
    [...A, "728,708 500,643 487,693"]
  ),
]);

const lines = [
  smooth(
    join(
      [...A, "725,299 733,350 733,400 718,500 716,560 730,600 765,645 785,710 783,745 770,810"],
      [...C, "677,100 674,135 684,150 700,165 707,200 702,250 692,290 700,310 728,340 732,370 728,410 740,425 795,445 838,485"],
      [...D, "75,455 125,505 180,530 205,560 250,575 300,622 380,634 425,627 460,600 510,560 520,553 550,553 565,575 590,598 612,603 628,615 625,632 590,638 583,642 615,670 605,680 580,683 572,695 570,720 545,735 495,767 410,768"],
      [...E, "620,198 618,235 585,260 560,277 500,285 470,305 473,325"]
    )
  ),
  smooth(
    join(
      [...A, "397,490 412,570 455,685 453,740 450,780"],
      [...C, "360,75 387,130 395,190 425,245 455,290 457,320 450,370 440,430 443,460 463,505 463,560 520,650 545,688 590,708 640,718 680,693 700,688 728,695 745,718 765,735 820,733 838,750 833,775 840,790 870,808"],
      [...E, "270,205 285,215 305,225 315,260 348,285 350,320 340,355 320,375 290,400 285,430"]
    )
  ),
  join([...C, "346,10 580,78 547,277 311,208 346,10"]),
  join([...C, "490,603 520,424 764,483 728,695"]),
  join([...C, "490,722"], [...D, "235,273"]),
  join([...B, "30,462 139,485 131,532 178,542"]),
  join([...A, "725,299 800,320 795,328"]),
].map(str);

const landBits = [
  join([...A, "795,325 793,340 775,355 773,380 785,395 805,395 820,385 850,400 865,425 865,440 888,450 895,478 910,460 945,460 962,462 970,445 955,432 930,435 915,430 905,410 885,400 890,375 875,360 850,365 840,372 825,365 805,350"]),
  join([...D, "62,135 95,140 120,125 150,125 165,130 188,145 182,160 187,200 160,205 140,218 110,195 80,180 65,155"]),
  join([...E, "312,435 315,425 350,405 360,380 400,375 430,370 450,380 448,400 455,430 430,435 370,430 360,450 325,452"]),
  join([...E, "450,385 475,370 485,390 480,400 455,408"]),
  join([...E, "485,365 520,348 525,375 515,395 498,395"]),
  join([...E, "455,420 470,418 475,430 460,432"]),
  join([...E, "535,400 548,395 550,410 540,418"]),
  join([...E, "675,352 695,348 708,365 695,388 675,382"]),
  join([...E, "203,465 225,460 232,478 215,485 203,480"]),
  join([...E, "240,462 262,460 255,480 240,470"]),
  join([...E, "110,488 125,478 150,480 155,492 112,492"]),
  join([...E, "490,465 505,468 520,480 500,482"]),
  join([...E, "1113,318 1120,300 1124,322"]),
  join([...E, "980,203 990,197 1008,203"]),
  join([...E, "905,205 930,195 942,205"]),
  join([...D, "500,425 525,410 515,450 498,448"]),
].map((p) => str(rough(p, 1.8)));

const waterBits = [
  join([...B, "425,18 440,22 437,35 425,50 418,75 402,75 418,76 425,95 460,98 490,105 520,108 540,117 550,105 560,88 575,88 590,98 592,85 575,70 545,65 540,90 543,65 545,40 533,18"]),
  join([...B, "540,18 550,35 565,50 578,55 583,47 565,35 555,18"]),
  join([...B, "196,160 215,170 240,178 247,187 237,205 225,208 214,202 217,215 233,245 228,250 183,238"]),
  join([...E, "650,235 716,243 718,255 706,265 722,285 735,300 715,290 700,262 690,300 676,275 685,258 650,256"]),
  join([...E, "812,152 855,152 872,158 866,148 878,108 860,140 850,152 812,168"]),
].map((p) => str(rough(p, 0.6)));

/* [x, y, spread x, spread y, count] for the reef and islet clusters */
const clusters: [number, number, number, number, number][] = [
  [882, 255, 24, 24, 34], [735, 398, 18, 30, 22], [765, 400, 30, 22, 46], [785, 310, 14, 20, 16], [590, 380, 24, 12, 20],
  [720, 355, 22, 10, 8], [250, 468, 14, 12, 12], [270, 490, 40, 3, 16], [188, 490, 25, 2, 7], [465, 400, 18, 30, 14], [850, 295, 16, 8, 10],
  [800, 430, 12, 8, 6], [765, 444, 20, 8, 5], [940, 235, 10, 8, 4], [700, 330, 40, 12, 14], [805, 292, 35, 6, 12],
  [960, 178, 20, 12, 10], [1025, 140, 24, 12, 10], [1085, 78, 30, 20, 12], [1025, 270, 4, 18, 4], [1020, 168, 2, 2, 1], [535, 447, 2, 2, 1],
  [505, 475, 22, 10, 9], [560, 375, 12, 6, 5], [625, 375, 8, 4, 2], [680, 285, 12, 20, 8], [495, 360, 20, 8, 10], [720, 280, 10, 12, 6],
];
let s = 11;
const rnd = () => {
  s = (s * 48271) % 2147483647;
  return s / 2147483647 - 0.5;
};
const islets = clusters
  .flatMap(([x, y, w, h, n]) =>
    Array.from({ length: n }, () => {
      const px = E[0] + (x + rnd() * w * 1.8) / 3;
      const py = E[1] + (y + rnd() * h * 1.8) / 3;
      return `M${px.toFixed(1)} ${py.toFixed(1)}l${(rnd() * 5).toFixed(1)} ${(rnd() * 4).toFixed(1)} ${(rnd() * 4).toFixed(1)} ${(rnd() * 5).toFixed(1)}z`;
    })
  )
  .join("");

const lat = [["62°", 299], ["60°", 407], ["58°", 515.5], ["56°", 621.5], ["54°", 726]] as const;
const lon = [["-172°", 567], ["-168°", 689], ["-164°", 808], ["-160°", 924], ["-156°", 1040]] as const;

const MapView = () => (
  <svg width="968" height="820" viewBox="271 124 968 820">
    <defs>
      <clipPath id="frame">
        <rect x="458" y="197" width="609" height="607" />
      </clipPath>
    </defs>
    <path d="M293.500 123v757.500H1240" fill="none" stroke="#000" shapeRendering="crispEdges" />
    <rect x="455.500" y="194.500" width="614" height="613" fill="none" stroke="#a8a8a8" strokeDasharray="3 2" shapeRendering="crispEdges" />
    <g clipPath="url(#frame)" stroke="#000" strokeWidth="1" strokeLinejoin="round" shapeRendering="crispEdges">
      <polygon points={russiaWest} fill="#ccc" stroke="#6e6e6e" />
      <polygon points={russiaEast} fill="#ccc" stroke="#6e6e6e" />
      <polygon points={pale} fill="#ffffbe" />
      <polygon points={alaska} fill="#ccc" />
      <polygon points={bright} fill="#ffff73" />
      <polygon points={green} fill="#73b273" />
      {waterBits.map((p, i) => (
        <polygon key={i} points={p} fill="#fff" />
      ))}
      {lines.map((p, i) => (
        <polyline key={i} points={p} fill="none" />
      ))}
      {landBits.map((p, i) => (
        <polygon key={i} points={p} fill="#ccc" />
      ))}
      <path d={islets} fill="#777" />
      <path d="M793 215.500h1.500M795 217h1M820 409l1 6M819 415l3 3M828 457l3 5M932 594l3-2 3 5M942 601h2M888 592h6l-3 2z" fill="none" />
      <path d="M837 289l25 6 5 3M868 298l8-3 14 0 9 2 6 4-14-3-13-1zM899 294l4 1 6 8-2 5-5-6z" fill="#fff" />
    </g>
    <rect x="457" y="196" width="610" height="608.500" fill="none" stroke="#000" strokeWidth="2" shapeRendering="crispEdges" />
    <g fontFamily="Liberation Sans, Arial, sans-serif" fontSize="10" fill="#000">
      {lat.map(([t, y]) => (
        <g key={t}>
          <rect x="451" y={y - 1} width="5" height="2" />
          <text x="433.500" y={y + 4}>{t}</text>
        </g>
      ))}
      {lon.map(([t, x]) => (
        <g key={t}>
          <rect x={x - 1} y="806" width="2" height="5" />
          <text x={x} y="823" textAnchor="middle">{t}</text>
        </g>
      ))}
    </g>
    <text transform="translate(714.500 313) rotate(32)" fontSize="7.500" fill="#54453c" letterSpacing="0.15" fontFamily="Liberation Sans, sans-serif">
      St. Lawrence I.
    </text>
    <g stroke="#00ffff" strokeDasharray="1 1" shapeRendering="crispEdges">
      {guideY.map((y) => (
        <path key={y} d={`M272 ${y + 0.5}H1239`} />
      ))}
      <path d="M618.500 123V944" />
    </g>
  </svg>
);

/* ---------- status and task bar ---------- */

const Status = styled.footer`
  height: 21px;
  flex: none;
  display: flex;
  align-items: center;
  background: #f0f0f0;
`;
const StatusCell = styled.span<{ $w: number }>`
  width: ${(p) => p.$w}px;
  height: 19px;
  border-right: 1px solid #f8f8f8;
  line-height: 22px;
  flex: none;
  padding-left: 2px;
  letter-spacing: -0.500px;
`;
const Taskbar = styled.div`
  height: 40px;
  flex: none;
  display: flex;
  background: #121315;
  color: #fff;
`;
const Task = styled.div<{ $w: number; $open?: boolean; $active?: boolean; $pad?: number; $ml?: number }>`
  width: ${(p) => p.$w}px;
  height: 40px;
  flex: none;
  margin-left: ${(p) => p.$ml ?? 0}px;
  padding-left: ${(p) => p.$pad ?? 0}px;
  display: flex;
  align-items: center;
  gap: 5px;
  letter-spacing: -0.280px;
  background: ${(p) => (p.$active ? "#434446" : "transparent")};
  border-bottom: 2px solid ${(p) => (p.$open ? "#91c5f2" : "transparent")};
  border-top: 2px solid transparent;
`;
const Clock = styled.div`
  width: 60px;
  flex: none;
  text-align: center;
  line-height: 18px;
  padding-top: 2px;
  letter-spacing: -0.480px;
`;
const TrayIcon = styled.span<{ $w: number }>`
  width: ${(p) => p.$w}px;
  flex: none;
  display: flex;
  align-items: center;
  justify-content: center;
`;
const ShowDesktop = styled.span`
  width: 1px;
  height: 40px;
  margin-left: 1px;
  background: #5a5b5d;
`;

const ArcLogo = ({ size }: { size: number }) => (
  <svg width={size} height={size} viewBox="0 0 22 22">
    <circle cx="10" cy="10" r="9.500" fill="#1f5f9e" stroke="#173a5c" />
    <path d="M2 8q3-5 8-6l-1 5-5 5zM12 15l6-4v3l-5 4z" fill="#5fae4a" />
    <circle cx="11.500" cy="9.500" r="5" fill="#9fd8ee" stroke="#eee" strokeWidth="1.400" />
    <path d="M15 13l5.500 6.500" stroke="#b9722c" strokeWidth="3" />
  </svg>
);

const menus = [["File", 34], ["Edit", 36], ["View", 41], ["Bookmarks", 75], ["Insert", 45], ["Selection", 64], ["Geoprocessing", 94], ["Customize", 72], ["Windows", 65], ["Help", 40]] as const;

export default function App() {
  return (
    <Screen>
      <Global />
      <TitleBar>
        <ArcLogo size={16} />
        <Title>strata_areas_2019.mxd - ArcMap</Title>
        <Caption>
          <svg width="11" height="11"><path d="M0.500 5.500h10" stroke="#000" /></svg>
        </Caption>
        <Caption>
          <svg width="11" height="11"><path d="M0.500 3.500h7v7h-7zM2.500 3.500v-3h8v8h-3" fill="none" stroke="#000" /></svg>
        </Caption>
        <Caption>
          <svg width="11" height="11"><path d="M0.500 0.500l10 10M10.500 0.500l-10 10" stroke="#000" /></svg>
        </Caption>
      </TitleBar>

      <Bars>
        <MenuBar>
          {menus.map(([t, w]) => (
            <MenuItem key={t} $w={w}>{t}</MenuItem>
          ))}
        </MenuBar>
        <BarRow>
          <Toolbar>
            <Grip />
            <Tools items={["newDoc", "open", "save", "print", "|", "cut", "copy", "paste", "del", "|", "undo", "redo", "|", "add", "v", ["|", 8]]} />
            <Combo $w={148}>
              <span>1:8,000,000</span>
              <Chevron />
            </Combo>
            <Tools items={["|", { on: "edit" }, "|", "toc", "catalog", "search", "toolbox", "python", "|", "model"]} />
            <Overflow />
          </Toolbar>
          <Toolbar $ml={64}>
            <Grip />
            <Tools items={["pgZoomIn", "pgZoomOut", "pgPan", "pgWhole", "pg100", "|", "pgFixedIn", "pgFixedOut", "|", "pgBack", "pgFwd"]} />
            <Combo $w={60}>
              <span>94%</span>
              <Chevron />
            </Combo>
            <Tools items={["|", "draft", "focus", "changeLayout", "ddp"]} />
            <Overflow />
          </Toolbar>
        </BarRow>
        <BarRow>
          <Toolbar>
            <Grip $w={6} />
            <Tools items={["zoomIn", "zoomOut", "pan", ["globe", 23], "|", "fixedIn", "fixedOut", "|", "back", "fwd", "|", "select", ["v", 11], "clearSel", "|", { on: "pointer" }, ["|", 5], "info", "bolt", "popup", ["|", 7], "measure", ["|", 5], "find", ["route", 23], "xy", "|", "time", "|", "viewer"]} />
            <Overflow />
          </Toolbar>
        </BarRow>
      </Bars>

      <Main>
        <Toc>
          <TocHead>
            <span>Table Of Contents</span>
            <svg width="8" height="10"><path d="M2.500 0v5M6 0v5M2 0.500h4M0 5.500h8M4 6v4" stroke="#000" fill="none" /></svg>
            <svg width="8" height="8"><path d="M0 0l8 8M8 0l-8 8" stroke="#000" strokeWidth="1.500" /></svg>
          </TocHead>
          <TocTools>
            <Tools items={[{ on: "listDraw" }, "listSource", "listVis", "listSel", ["|", 5], "options"]} />
          </TocTools>
          <Tree>
            <Row $indent={8}>
              <Expander />
              <Gap $w={5} />
              <Icon name="layers" />
              <Gap $w={6} />
              <Name $bold>View1</Name>
            </Row>
            {layers.map((l) => (
              <React.Fragment key={l.name}>
                <Row $indent={27}>
                  <Expander />
                  <Check>
                    {l.on && (
                      <svg width="9" height="9"><path d="M1 4l2.500 3L8 1.500" fill="none" stroke="#000" strokeWidth="2" /></svg>
                    )}
                  </Check>
                  <Name $caps={/_\d{4}|^NBS_/.test(l.name)}>{l.name}</Name>
                </Row>
                <Row $indent={l.cross ?? 59}>
                  {l.cross ? <Cross /> : <Swatch $fill={l.fill!} $line={l.soft ? "#6e6e6e" : "#000"} />}
                  {l.editing && <EditMark />}
                </Row>
              </React.Fragment>
            ))}
          </Tree>
        </Toc>

        <View>
          <RulerTop>
            <Gap $w={23} />
            <HRuler />
          </RulerTop>
          <Body>
            <RulerLeft>
              <VRuler />
            </RulerLeft>
            <Center>
              <MapView />
              <EditorBar>
                <EditorHead>
                  <span>Editor</span>
                  <svg width="7" height="4"><path d="M0 0h7L3.500 4z" fill="#fff" /></svg>
                  <svg width="9" height="9"><path d="M1 1l7 7M8 1l-7 7" stroke="#fff" strokeWidth="2" /></svg>
                </EditorHead>
                <EditorTools>
                  <EditorLabel>Editor</EditorLabel>
                  <Tools items={[["v", 8], ["|", 8], ["eArrow", 22], "eArrowA", ["|", 6], "eLine", "eArc", "eTrace", ["vg", 9], ["ePoint", 24], "|", "eVert", "eReshape", "eCut", "eSplit", "eRotate", ["|", 5], "eAttr", "eSketch", "|", "eCreate"]} />
                </EditorTools>
              </EditorBar>
            </Center>
            <VScroll>
              <svg width="9" height="6"><path d="M1 5l3.500-3.500L8 5" fill="none" stroke="#444" strokeWidth="2" /></svg>
              <VThumb />
              <svg width="9" height="6"><path d="M1 1l3.500 3.500L8 1" fill="none" stroke="#444" strokeWidth="2" /></svg>
            </VScroll>
          </Body>
          <HScroll>
            <ViewTab><svg width="8" height="8"><rect x=".5" y=".5" width="7" height="7" fill="#9cc266" stroke="#222" /><path d="M2 6l3-4" stroke="#fff" /></svg></ViewTab>
            <ViewTab $on><svg width="8" height="9"><path d="M.5.500h5l2 2v6h-7zM2 4.500h4M2 6.500h4" fill="#fff" stroke="#222" /></svg></ViewTab>
            <Gap $w={10} />
            <svg width="10" height="10"><path d="M1 4q3-5 7-1.500M9 6q-3 5-7 1.500" fill="none" stroke="#134f91" strokeWidth="1.400" /><path d="M9 0v4H5zM1 10V6h4z" fill="#134f91" /></svg>
            <Gap $w={7} />
            <svg width="6" height="8"><path d="M1.500 0v7M4.500 0v7" stroke="#134f91" strokeWidth="1.600" /></svg>
            <Gap $w={18} />
            <svg width="6" height="9"><path d="M5 1L1.500 4.500 5 8" fill="none" stroke="#444" strokeWidth="2" /></svg>
            <HThumb />
            <Gap $w={236} />
            <svg width="6" height="9"><path d="M1 1l3.500 3.500L1 8" fill="none" stroke="#444" strokeWidth="2" /></svg>
          </HScroll>
        </View>

        <Dock>
          <DockTab>
            <Icon name="search" />
            <span>Search</span>
          </DockTab>
        </Dock>
      </Main>

      <Status>
        <StatusCell $w={745} />
        <StatusCell $w={20} />
        <StatusCell $w={260} />
        <StatusCell $w={253}>3.01  8.36 Inches</StatusCell>
      </Status>

      <Taskbar>
        <Task $w={48} $pad={16}>
          <svg width="16" height="16"><path d="M0 2.500L7 1.500v6H0zM8 1.300L16 0v7.500H8zM0 8.500h7v6L0 13.500zM8 8.500h8V16l-8-1.300z" fill="#fff" /></svg>
        </Task>
        <Task $w={55} $pad={16}>
          <svg width="17" height="16"><path d="M.5 0v2.500h11V0M.5 16v-2.500h11V16M.5 5.500h11v5H.500zM15.500 0v3M15.500 8v8" fill="none" stroke="#fff" /><rect x="14" y="4" width="3" height="3" fill="#fff" /></svg>
        </Task>
        <Task $w={141} $pad={9} $open>
          <svg width="20" height="24"><path d="M1 4l6-3 10 3v16l-7 3-9-3z" fill="#6ec4f7" /><path d="M10 6l7-2v16l-7 3z" fill="#3c9be0" /><path d="M1 4l9 2v17" stroke="#bde4fb" fill="none" /></svg>
          *chukchi*.shp - S...
        </Task>
        <Task $w={140} $ml={8} $pad={9} $open>
          <svg width="20" height="24"><path d="M1 2h6v20H1z" fill="#e9c55c" /><path d="M3 3h10v16l2 3H5z" fill="#fbe08c" /><path d="M10 10h5v12h-5z" fill="#f6d06c" /></svg>
          STRATA_AREA_S...
        </Task>
        <Task $w={57} $pad={16}>
          <svg width="24" height="26" viewBox="0 0 24 26">
            <path d="M6 14.500h13q.5-8-6.500-8.500-7.500 0-7.500 8 1 7.500 8 7.500 4.500 0 6-4" fill="none" stroke="#35b8f1" strokeWidth="4" />
            <path d="M3 23q-3-4 3-11Q15 1 21 2.500q2 2-.5 7" fill="none" stroke="#f7c82e" strokeWidth="1.800" />
          </svg>
        </Task>
        <Task $w={141} $pad={7} $open>
          <svg width="22" height="22" viewBox="0 0 22 22">
            <circle cx="11" cy="11" r="11" fill="#ffcd40" />
            <path d="M11 11L1.500 5.500A11 11 0 0 1 20.500 5.500H11z" fill="#e04a3a" />
            <path d="M11 11L1.500 5.500A11 11 0 0 0 10 22l5-8.500z" fill="#1da462" />
            <circle cx="11" cy="11" r="5" fill="#4a8af4" stroke="#fff" strokeWidth="1.500" />
          </svg>
          Inbox (303) - dan....
        </Task>
        <Task $w={56} $pad={16}>
          <svg width="25" height="26" viewBox="0 0 25 26">
            <ellipse cx="11" cy="10" rx="10" ry="7.500" fill="#e9e9ec" transform="rotate(-15 11 10)" />
            <path d="M1 13q2 5 10 4.500 6-.5 7-4" stroke="#c84b4b" strokeWidth="2.500" fill="none" />
            <path d="M12 4l4 9M20 5l-10 7M6 9l7 3" stroke="#b8484c" strokeWidth="1.500" />
            <circle cx="16" cy="22" r="2.300" fill="none" stroke="#2a86d8" strokeWidth="1.800" />
            <circle cx="21" cy="17.500" r="2.300" fill="none" stroke="#2a86d8" strokeWidth="1.800" />
          </svg>
        </Task>
        <Task $w={140} $pad={7} $open>
          <svg width="22" height="24" viewBox="0 0 22 24">
            <path d="M0 0h17v22H0z" fill="#c5d4e8" />
            <path d="M0 7h17M0 14h17M8 0v22" stroke="#6d8fb8" />
            <circle cx="15" cy="17" r="6.500" fill="#1fb52a" stroke="#eaffea" />
            <path d="M13 13.500l5 3.500-5 3.500z" fill="#fff" />
          </svg>
          Oracle SQL Devel...
        </Task>
        <Task $w={149} $ml={5} $pad={9} $open $active>
          <ArcLogo size={24} />
          strata_areas_2019...
        </Task>
        <Task $w={141} $ml={4} $pad={7} $open>
          <svg width="22" height="24" viewBox="0 0 22 24">
            <path d="M10 3h12v18H10z" fill="#fff" />
            <path d="M13 6.500h7M13 9.500h7M13 12.500h7M13 15.500h7M13 18.500h7" stroke="#2b579a" />
            <path d="M0 2l13-2v24L0 22z" fill="#2b579a" />
            <text x="1.500" y="16" fontSize="10" fontWeight="700" fill="#fff" fontFamily="Open Sans, sans-serif">W</text>
          </svg>
          Document1 - Wo...
        </Task>
        <TrayIcon $w={36}>
          <svg width="12" height="7"><path d="M1 6l5-5 5 5" fill="none" stroke="#fff" strokeWidth="1.300" /></svg>
        </TrayIcon>
        <TrayIcon $w={12}>
          <svg width="17" height="15"><path d="M4.500 3.500h12v7h-12M9.500 10.500v3M6 13.500h8M.5.500h4v4h-4zM2.500 4v9.500h3" fill="none" stroke="#fff" /></svg>
        </TrayIcon>
        <TrayIcon $w={32}>
          <svg width="17" height="16"><path d="M.5 5.500h3l4-4v13l-4-4h-3zM10 5q2 3 0 6M12.500 3q3.500 5 0 10M15 1.500q4 6.500 0 13" fill="none" stroke="#fff" /></svg>
        </TrayIcon>
        <Clock>
          2:01 PM{"\n"}12/10/2019
        </Clock>
        <TrayIcon $w={50}>
          <svg width="26" height="28" viewBox="0 0 26 28">
            <path d="M1 5h15v12H8l-3 3v-3H1z" fill="#fff" />
            <path d="M3 8.500h11M3 11h11M3 13.500h8" stroke="#222" />
            <circle cx="16" cy="20" r="7.500" fill="#3a3b3d" stroke="#aaa" />
            <text x="16" y="24" textAnchor="middle" fontSize="11" fill="#fff" fontFamily="Open Sans, sans-serif">1</text>
          </svg>
        </TrayIcon>
        <ShowDesktop />
      </Taskbar>
    </Screen>
  );
}
